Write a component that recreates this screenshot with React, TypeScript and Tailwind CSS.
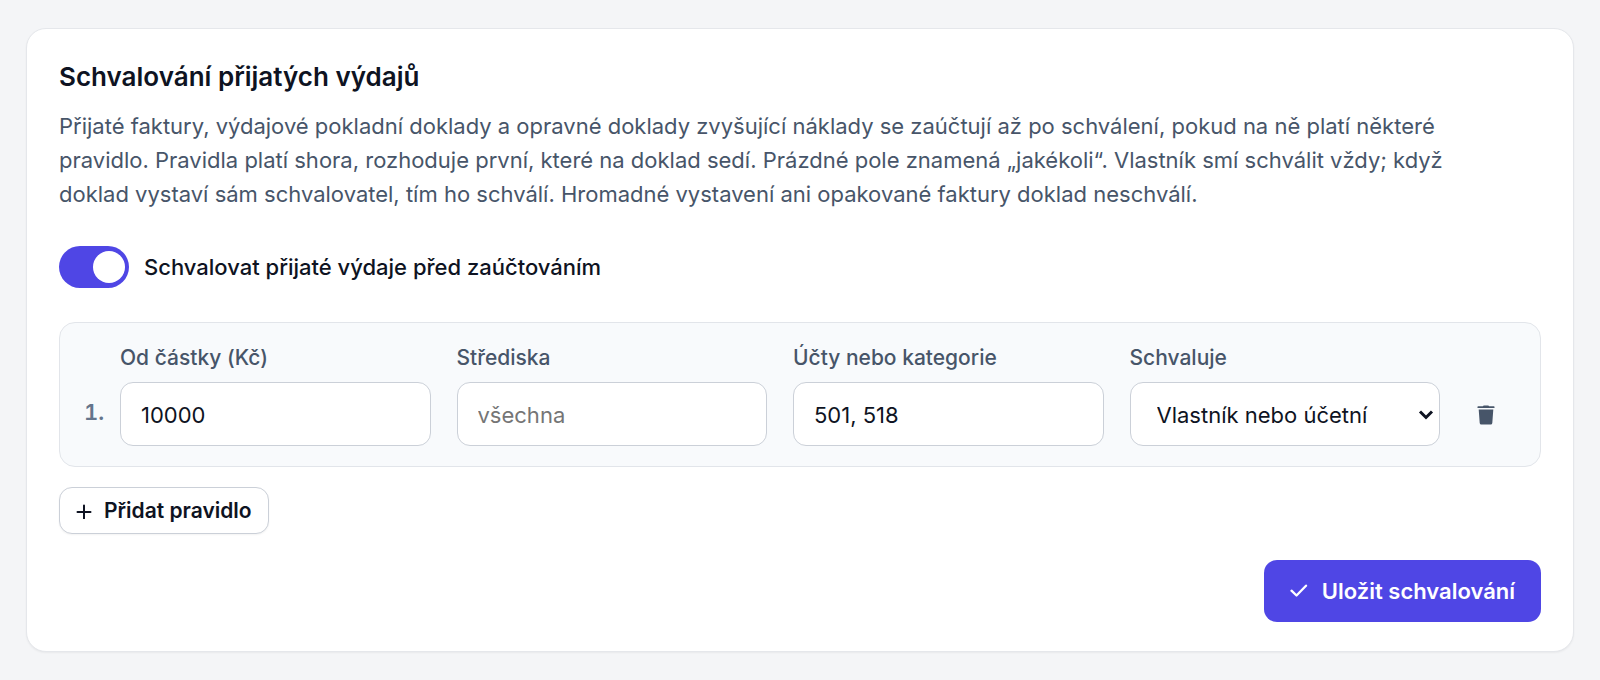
import { useState } from "react";

const fieldClass =
  "h-16 w-full min-w-0 rounded-[13px] border border-[#cbd0d8] bg-white px-5 pt-0.5 text-[22px] text-[#0e1322] placeholder:text-[#757575]";
const labelClass = "text-[21px] leading-[30px] font-medium text-[#475569]";

type TextFieldProps = {
  id: string;
  label: string;
  value: string;
  placeholder?: string;
  onChange: (value: string) => void;
};

function TextField({ id, label, value, placeholder, onChange }: TextFieldProps) {
  return (
    <div className="flex min-w-0 flex-1 flex-col gap-[9px]">
      <label htmlFor={id} className={labelClass}>
        {label}
      </label>
      <input
        id={id}
        type="text"
        className={fieldClass}
        value={value}
        placeholder={placeholder}
        onChange={(e) => onChange(e.target.value)}
      />
    </div>
  );
}

export default function App() {
  const [enabled, setEnabled] = useState(true);
  const [amount, setAmount] = useState("10000");
  const [centers, setCenters] = useState("");
  const [accounts, setAccounts] = useState("501, 518");

  return (
    <main className="min-h-screen bg-[#f4f5f7] px-[26px] py-7 font-['Inter',sans-serif] text-[#0e1322]">
      <section className="rounded-[20px] border border-[#e5e7eb] bg-white px-8 pt-8 pb-[29px] shadow-xs">
        <h2 className="text-[26px] leading-8 font-semibold">Schvalování přijatých výdajů</h2>
        <p className="mt-4 max-w-[1430px] text-[22px] leading-[34px] text-[#475569]">
          Přijaté faktury, výdajové pokladní doklady a opravné doklady zvyšující náklady se zaúčtují až po
          schválení, pokud na ně platí některé pravidlo. Pravidla platí shora, rozhoduje první, které na doklad
          sedí. Prázdné pole znamená „jakékoli“. Vlastník smí schválit vždy; když doklad vystaví sám schvalovatel,
          tím ho schválí. Hromadné vystavení ani opakované faktury doklad neschválí.
        </p>

        <label className="mt-[35px] flex w-fit cursor-pointer items-center gap-[15px] text-[22px] font-medium">
          <input
            type="checkbox"
            role="switch"
            checked={enabled}
            onChange={(e) => setEnabled(e.target.checked)}
            className="flex h-[42px] w-[70px] appearance-none items-center rounded-full bg-[#cbd5e1] px-1 before:size-8 before:rounded-full before:bg-white checked:justify-end checked:bg-[#4f46e5]"
          />
          Schvalovat přijaté výdaje před zaúčtováním
        </label>

        <div className="mt-[34px] flex items-end rounded-2xl border border-[#e2e5ea] bg-[#f8fafc] py-5 pr-8 pl-6">
          <span className="w-9 pb-[18px] text-[22px] leading-8 font-semibold text-[#64748b] tabular-nums">1.</span>
          <div className="flex min-w-0 flex-1 gap-[26px]">
            <TextField id="amount" label="Od částky (Kč)" value={amount} onChange={setAmount} />
            <TextField id="centers" label="Střediska" value={centers} placeholder="všechna" onChange={setCenters} />
            <TextField id="accounts" label="Účty nebo kategorie" value={accounts} onChange={setAccounts} />
            <div className="flex min-w-0 flex-1 flex-col gap-[9px]">
              <label htmlFor="approver" className={labelClass}>
                Schvaluje
              </label>
              <div className="grid items-center">
                <select id="approver" className={`${fieldClass} col-start-1 row-start-1 appearance-none pl-[26px]`}>
                  <option>Vlastník nebo účetní</option>
                  <option>Vlastník</option>
                </select>
                <svg
                  className="pointer-events-none col-start-1 row-start-1 mr-1.5 h-4 w-4 justify-self-end"
                  viewBox="0 0 16 16"
                  fill="none"
                  stroke="#0e1322"
                  strokeWidth="3"
                  aria-hidden="true"
                >
                  <path d="M2 5.500 8 11.500 14 5.500" />
                </svg>
              </div>
            </div>
          </div>
          <button type="button" aria-label="Odebrat pravidlo" className="ml-6 flex h-16 w-11 items-center justify-center pt-0.5">
            <svg className="h-5 w-[18px]" viewBox="0 0 18 20" fill="#475569" aria-hidden="true">
              <path d="M5.800 1.300Q6.200.4 7 .4h4q.8 0 1.200.9h4.500q.9 0 .9.9t-.9.9H1.300Q.4 3.100.4 2.200t.9-.9z" />
              <path d="M1.700 4.500h14.600l-1 13.600q-.1 1.500-1.600 1.500H4.300q-1.500 0-1.600-1.500z" />
            </svg>
          </button>
        </div>

        <button
          type="button"
          className="mt-5 flex h-[47px] items-center gap-3 rounded-[13px] border border-[#cbd0d8] bg-white px-4 text-[21px] font-semibold shadow-xs"
        >
          <svg className="size-4" viewBox="0 0 16 16" fill="none" stroke="currentColor" strokeWidth="2" strokeLinecap="round" aria-hidden="true">
            <path d="M8 2.500v13M1.500 9h13" />
          </svg>
          Přidat pravidlo
        </button>

        <div className="mt-[26px] flex justify-end">
          <button
            type="button"
            className="flex h-[62px] items-center gap-[14px] rounded-[13px] bg-[#4f46e5] px-[26px] text-[22px] font-semibold text-white"
          >
            <svg className="size-[18px]" viewBox="0 0 18 18" fill="none" stroke="currentColor" strokeWidth="2.300" strokeLinecap="round" strokeLinejoin="round" aria-hidden="true">
              <path d="M1.500 8.700 6.500 13.500 16 3.700" />
            </svg>
            Uložit schvalování
          </button>
        </div>
      </section>
    </main>
  );
}
